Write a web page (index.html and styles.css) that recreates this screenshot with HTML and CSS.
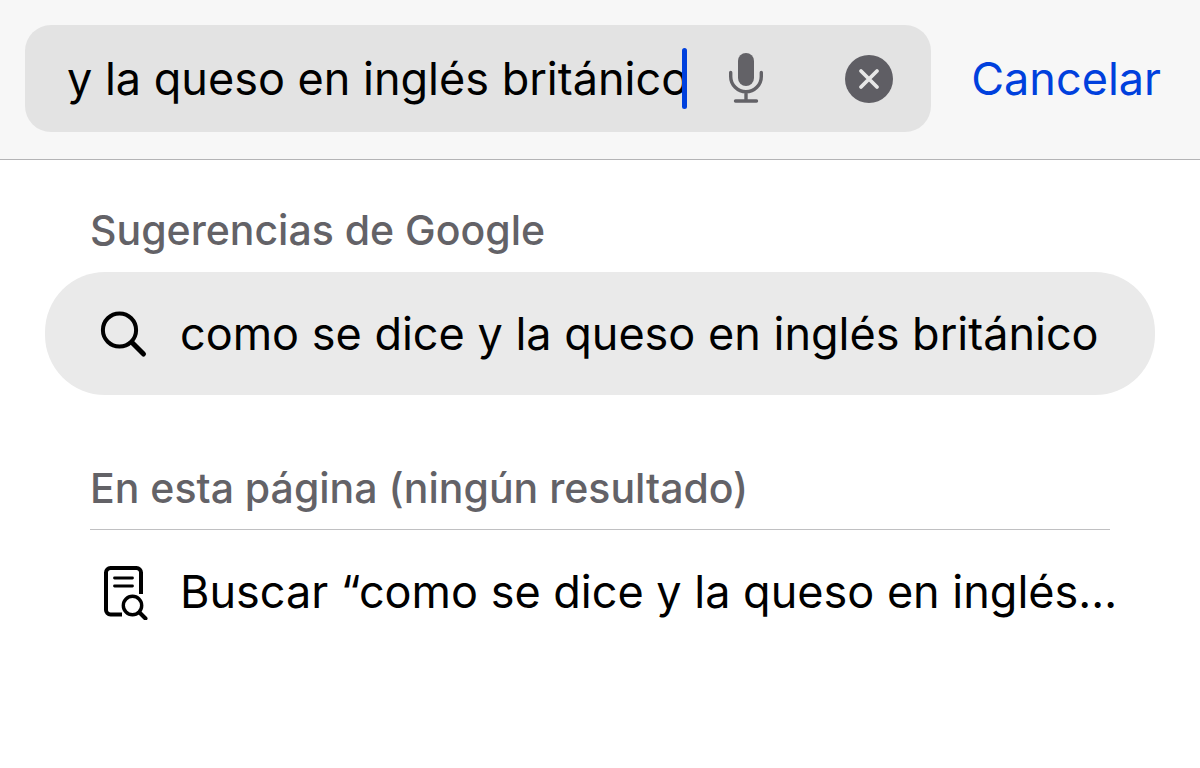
FILE: index.html
```html
<!DOCTYPE html>
<html lang="es">
<head>
<meta charset="utf-8">
<meta name="viewport" content="width=device-width, initial-scale=1">
<title>Búsqueda</title>
<link rel="stylesheet" href="styles.css">
</head>
<body>
<header class="bar">
  <form class="field" role="search">
    <div class="entry">
      <input class="query" type="text" aria-label="Buscar" value="y la queso en inglés británico">
      <span class="caret"></span>
    </div>
    <button class="icon-button" type="button" aria-label="Dictar">
      <svg width="36" height="52" viewBox="0 0 36 52" fill="none" stroke="#636267" stroke-width="3.4" stroke-linecap="round">
        <rect x="10" y="0" width="16" height="33" rx="8" fill="#636267" stroke="none"/>
        <path d="M2.700 19.500v4a15.300 15.300 0 0 0 30.600 0v-4M18 39v9M7.500 48h21"/>
      </svg>
    </button>
    <button class="icon-button" type="button" aria-label="Borrar">
      <svg width="48" height="48" viewBox="0 0 48 48">
        <circle cx="24" cy="24" r="24" fill="#5f5e64"/>
        <path d="M16 16l16 16M32 16L16 32" stroke="#e7e7e7" stroke-width="3.800" stroke-linecap="round"/>
      </svg>
    </button>
  </form>
  <button class="cancel" type="button">Cancelar</button>
</header>
<main class="results">
  <section class="group">
    <h2 class="heading">Sugerencias de Google</h2>
    <button class="row row-selected" type="button">
      <svg class="glyph" width="48" height="48" viewBox="0 0 48 48" fill="none" stroke="#000" stroke-linecap="round">
        <circle cx="19.500" cy="20" r="16.600" stroke-width="4"/>
        <path d="M32 32.500L43.500 44" stroke-width="5"/>
      </svg>
      <span class="label">como se dice y la queso en inglés británico</span>
    </button>
  </section>
  <section class="group">
    <h2 class="heading heading-ruled">En esta página (ningún resultado)</h2>
    <button class="row" type="button">
      <svg class="glyph" width="48" height="56" viewBox="0 0 48 56" fill="none" stroke="#000" stroke-linecap="round">
        <path d="M22 50.500H10.500A4.500 4.500 0 0 1 6 46V8.500A4.500 4.500 0 0 1 10.500 4h26a4.500 4.500 0 0 1 4.500 4.500V30" stroke-width="4" stroke-linecap="butt"/>
        <path d="M14.500 14h18M14.500 22h18" stroke-width="2.800"/>
        <circle cx="32.500" cy="41.500" r="9.200" stroke-width="3.400"/>
        <path d="M39.500 48.500l6 6" stroke-width="4"/>
      </svg>
      <span class="label">Buscar “como se dice y la queso en inglés británico”</span>
    </button>
  </section>
</main>
</body>
</html>
```
FILE: styles.css
```css
* {
  box-sizing: border-box;
}

body {
  margin: 0;
  background: #fff;
  color: #000;
  font-family: Inter, "Liberation Sans", sans-serif;
  font-size: 45px;
  line-height: 56px;
}

button,
input {
  margin: 0;
  padding: 0;
  border: 0;
  background: none;
  color: inherit;
  font: inherit;
  outline: none;
}

.bar {
  display: flex;
  align-items: center;
  gap: 40px;
  padding: 25px 39px 27px 25px;
  background: #f7f7f7;
  border-bottom: 1px solid #b4b4b6;
}

.field {
  display: flex;
  flex: 1;
  align-items: center;
  min-width: 0;
  height: 107px;
  padding: 0 38px 0 42px;
  border-radius: 26px;
  background: #e3e3e3;
}

.entry {
  display: flex;
  flex: 1;
  align-items: center;
  min-width: 0;
}

.query {
  min-width: 0;
  field-sizing: content;
}

.caret {
  flex: none;
  width: 5px;
  height: 61px;
  margin-left: -6px;
  border-radius: 3px;
  background: #0040dd;
}

.icon-button {
  display: flex;
  flex: none;
}

.icon-button + .icon-button {
  margin-left: 81px;
}

.cancel {
  flex: none;
  color: #0040dd;
}

.results {
  padding: 42px 45px;
}

.group + .group {
  margin-top: 65px;
}

.heading {
  margin: 0 45px;
  padding-bottom: 14px;
  color: #636267;
  font-size: 41px;
  font-weight: 500;
}

.heading-ruled {
  padding-bottom: 13px;
  border-bottom: 1px solid #c0c0c2;
}

.row {
  display: flex;
  align-items: center;
  gap: 32px;
  width: 100%;
  height: 123px;
  padding: 0 36px 0 55px;
  border-radius: 60px;
  text-align: left;
}

.row-selected {
  background: #eaeaea;
}

.glyph {
  flex: none;
}

.label {
  flex: 1;
  min-width: 0;
  overflow: hidden;
  text-overflow: ellipsis;
  white-space: nowrap;
}
```
